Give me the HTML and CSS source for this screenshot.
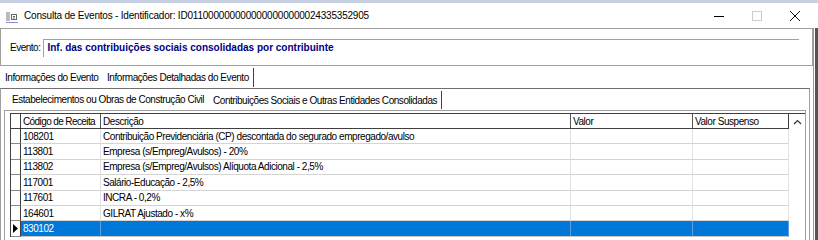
FILE: index.html
```html
<!DOCTYPE html>
<html lang="pt">
<head>
  <meta charset="UTF-8" />
  <title>Consulta de Eventos</title>
  <link rel="stylesheet" href="styles.css">
</head>
<body>
  <div class="topband"></div>
  <div class="titlebar">
    <svg class="appicon" width="12" height="12" viewBox="0 0 12 12">
      <path d="M1 1v9M3 1v9" stroke="#777" stroke-width="1" fill="none"/>
      <rect x="5.5" y="3.5" width="5" height="5" fill="none" stroke="#666"/>
      <path d="M7 5.5h2M7 7h2" stroke="#666"/>
      <path d="M0 11.5h12" stroke="#9b7fd0"/>
    </svg>
    <span class="title">Consulta de Eventos - Identificador: ID0110000000000000000000024335352905</span>
    <div class="caps">
      <span class="cap"><svg width="10" height="10" viewBox="0 0 10 10"><path d="M0 5.5h10" stroke="#000"/></svg></span>
      <span class="cap"><svg width="10" height="10" viewBox="0 0 10 10"><rect x="0.5" y="0.5" width="9" height="9" fill="none" stroke="#ccc"/></svg></span>
      <span class="cap"><svg width="10" height="10" viewBox="0 0 10 10"><path d="M0 0L10 10M10 0L0 10" stroke="#111" stroke-width="1"/></svg></span>
    </div>
  </div>

  <div class="client">
    <div class="main">
      <div class="evento-box">
        <span class="lbl">Evento:</span>
        <div class="edit">Inf. das contribuições sociais consolidadas por contribuinte</div>
      </div>

      <div class="tabs outer-tabs">
        <span class="tab">Informações do Evento</span>
        <span class="tab active">Informações Detalhadas do Evento</span>
      </div>
      <div class="page">
        <div class="tabs inner-tabs">
          <span class="tab">Estabelecimentos ou Obras de Construção Civil</span>
          <span class="tab active">Contribuições Sociais e Outras Entidades Consolidadas</span>
        </div>
        <div class="inner-page">
          <div class="grid">
            <div class="row head">
              <span class="ind"></span>
              <span class="c code">Código de Receita</span>
              <span class="c desc">Descrição</span>
              <span class="c valor">Valor</span>
              <span class="c susp">Valor Suspenso</span>
              <span class="sb"><svg width="9" height="6" viewBox="0 0 9 6"><path d="M1 5L4.5 1.5L8 5" stroke="#333" stroke-width="1.2" fill="none"/></svg></span>
            </div>
            <div class="row">
              <span class="ind"></span>
              <span class="c code">108201</span>
              <span class="c desc">Contribuição Previdenciária (CP) descontada do segurado empregado/avulso</span>
              <span class="c valor"></span>
              <span class="c susp"></span>
              <span class="sb"></span>
            </div>
            <div class="row">
              <span class="ind"></span>
              <span class="c code">113801</span>
              <span class="c desc">Empresa (s/Empreg/Avulsos) - 20%</span>
              <span class="c valor"></span>
              <span class="c susp"></span>
              <span class="sb"></span>
            </div>
            <div class="row">
              <span class="ind"></span>
              <span class="c code">113802</span>
              <span class="c desc">Empresa (s/Empreg/Avulsos) Alíquota Adicional - 2,5%</span>
              <span class="c valor"></span>
              <span class="c susp"></span>
              <span class="sb"></span>
            </div>
            <div class="row">
              <span class="ind"></span>
              <span class="c code">117001</span>
              <span class="c desc">Salário-Educação - 2,5%</span>
              <span class="c valor"></span>
              <span class="c susp"></span>
              <span class="sb"></span>
            </div>
            <div class="row">
              <span class="ind"></span>
              <span class="c code">117601</span>
              <span class="c desc">INCRA - 0,2%</span>
              <span class="c valor"></span>
              <span class="c susp"></span>
              <span class="sb"></span>
            </div>
            <div class="row">
              <span class="ind"></span>
              <span class="c code">164601</span>
              <span class="c desc">GILRAT Ajustado - x%</span>
              <span class="c valor"></span>
              <span class="c susp"></span>
              <span class="sb"></span>
            </div>
            <div class="row sel">
              <span class="ind"><svg width="6" height="9" viewBox="0 0 6 9"><path d="M0 0L5 4.5L0 9Z" fill="#000"/></svg></span>
              <span class="c code">830102</span>
              <span class="c desc"></span>
              <span class="c valor"></span>
              <span class="c susp"></span>
              <span class="sb"></span>
            </div>
          </div>
        </div>
      </div>
    </div>
  </div>
</body>
</html>
```

FILE: styles.css
```css
* {
  box-sizing: border-box;
}
body {
  margin: 0;
  width: 818px;
  height: 240px;
  overflow: hidden;
  background: #fff;
  font-family: "Liberation Sans", Arial, sans-serif;
  font-size: 10px;
  color: #000;
}
.topband {
  height: 3px;
  background: #c8d1e3;
}
.titlebar {
  height: 25px;
  display: flex;
  align-items: center;
  padding-left: 6px;
  background: #fff;
}
.appicon {
  margin-right: 6px;
  margin-top: 2px;
}
.title {
  flex: 1;
  letter-spacing: -0.2px;
}
.caps {
  display: flex;
  height: 100%;
  margin-right: 4px;
}
.cap {
  width: 38px;
  display: flex;
  align-items: center;
  justify-content: center;
}

.client {
  height: 212px;
  border-right: 3px solid #555;
  background: #fff;
}
.main {
  height: 100%;
  width: 814px;
  border-right: 1px solid #9a9a9a;
}

.evento-box {
  height: 38px;
  display: flex;
  align-items: flex-start;
  border: 1px solid #a0a0a0;
  padding: 10px 0 0 9px;
}
.lbl {
  letter-spacing: -0.5px;
  line-height: 16px;
  margin-top: 1px;
}
.edit {
  margin-left: 3px;
  width: 756px;
  height: 18px;
  border-top: 1px solid #a0a0a0;
  border-left: 1px solid #a0a0a0;
  padding-left: 3px;
  line-height: 16px;
  font-weight: bold;
  color: #000080;
}

.tabs {
  display: flex;
  height: 22px;
  align-items: stretch;
  letter-spacing: -0.45px;
  white-space: nowrap;
}
.tab {
  display: flex;
  align-items: center;
  padding: 0 4px;
  flex-shrink: 0;
}
.outer-tabs .tab:first-child {
  padding-left: 5px;
  width: 103px;
}
.inner-tabs {
  height: 21px;
  padding-left: 4px;
}
.inner-tabs .tab:first-child {
  padding-left: 4px;
  width: 201px;
}
.tab.active {
  background: #fff;
  border-right: 1px solid #404040;
  margin-top: 2px;
  margin-bottom: 1px;
}

.page {
  height: 152px;
  border-top: 1px solid #707070;
  border-left: 1px solid #a0a0a0;
  border-right: 1px solid #a0a0a0;
  margin-right: 3px;
  padding-left: 3px;
}
.inner-page {
  height: 140px;
  width: 802px;
  border-top: 1px solid #a0a0a0;
  border-left: 1px solid #a0a0a0;
  border-right: 1px solid #a0a0a0;
  padding: 2px 0 0 5px;
}

.grid {
  border-top: 1px solid #404040;
  border-left: 1px solid #404040;
  letter-spacing: -0.45px;
}
.row {
  display: flex;
  height: 15.4px;
}
.row.head {
  height: 15px;
}
.ind {
  width: 10px;
  border-right: 1px solid #404040;
  border-bottom: 1px solid #8a8a8a;
  display: flex;
  align-items: center;
  justify-content: center;
}
.c {
  border-right: 1px solid #e2e2e2;
  border-bottom: 1px solid #d4d4d4;
  padding-left: 2px;
  white-space: nowrap;
  overflow: hidden;
  display: flex;
  align-items: center;
}
.code { width: 80px; }
.desc { width: 470px; }
.valor { width: 122px; }
.susp { width: 96px; }
.sb {
  width: 16px;
  display: flex;
  align-items: center;
  justify-content: center;
}
.head .c {
  border-right-color: #555;
  border-bottom-color: #404040;
}
.head .code {
  letter-spacing: -0.6px;
}
.head .ind {
  border-bottom-color: #404040;
}
.head .susp {
  border-right-color: #404040;
}
.sel .c {
  background: #0078d7;
  color: #fff;
  border-right-color: #5c9ee0;
  border-bottom-color: #c8c8c8;
}
```
